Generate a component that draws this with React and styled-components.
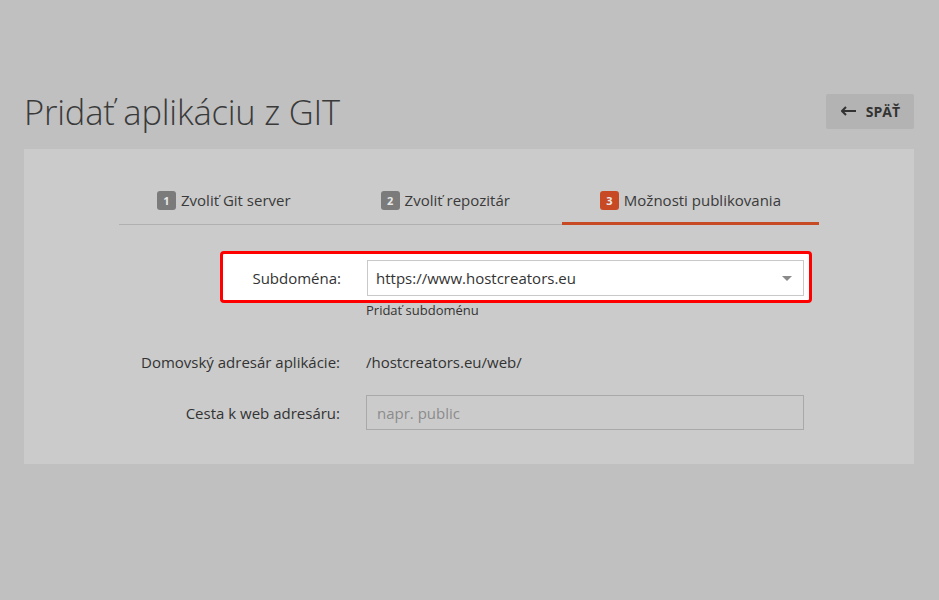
import React from "react";
import styled, { createGlobalStyle } from "styled-components";

const GlobalStyle = createGlobalStyle`
  html, body {
    margin: 0;
    padding: 0;
    background: #c0c0c0;
    font-family: "Open Sans", "Liberation Sans", sans-serif;
    color: #333;
  }
`;

const Page = styled.div`
  width: 939px;
  height: 600px;
  box-sizing: border-box;
  padding: 90px 25px 0 24px;
`;

const Header = styled.div`
  display: flex;
  align-items: center;
  justify-content: space-between;
  height: 42px;
  margin-bottom: 17px;
`;

const Title = styled.h1`
  margin: 0;
  font-size: 34.5px;
  font-weight: 300;
  color: #3a3a3a;
  letter-spacing: -0.2px;
`;

const BackButton = styled.button`
  display: flex;
  align-items: center;
  gap: 9px;
  height: 35px;
  padding: 0 14px 0 15px;
  border: none;
  border-radius: 2px;
  background: #b3b3b3;
  color: #333;
  font-family: inherit;
  font-size: 14px;
  font-weight: 700;
  cursor: pointer;
`;

const Panel = styled.div`
  background: #cbcbcb;
  padding: 28px 95px 34px 95px;
`;

const Tabs = styled.div`
  display: flex;
  justify-content: space-between;
  border-bottom: 1px solid #b0b0b0;
`;

const Tab = styled.div`
  display: flex;
  align-items: center;
  gap: 5px;
  padding: 13px 38px 12px;
  font-size: 15px;
  color: #3a3a3a;
  border-bottom: 3px solid ${({ active }) => (active ? "#c84a25" : "transparent")};
  margin-bottom: -1px;
`;

const Badge = styled.span`
  display: inline-flex;
  align-items: center;
  justify-content: center;
  width: 19px;
  height: 19px;
  border-radius: 3px;
  background: ${({ active }) => (active ? "#c84a25" : "#7b7b7b")};
  color: #e8e8e8;
  font-size: 11px;
  font-weight: 700;
`;

const Form = styled.div`
  display: flex;
  flex-direction: column;
  padding-top: 26px;
`;

const Highlight = styled.div`
  box-sizing: border-box;
  margin-left: 101px;
  width: 592px;
  border: 3px solid #ff0000;
  border-radius: 4px;
  background: #ffffff;
  padding: 6px 5px 4px 0;
`;

const Row = styled.div`
  display: grid;
  grid-template-columns: ${({ inset }) => (inset ? "118px" : "221px")} 1fr;
  column-gap: 26px;
  align-items: center;
  margin-right: ${({ inset }) => (inset ? "0" : "15px")};
  margin-top: ${({ gap }) => gap || 0}px;
`;

const Label = styled.div`
  text-align: right;
  font-size: 15px;
  color: #333;
`;

const SelectBox = styled.div`
  position: relative;
  display: flex;
  align-items: center;
  height: 34px;
  border: 1px solid #c9c9c9;
  padding: 0 8px;
  font-size: 15px;
  color: #333;
  background: #fff;
`;

const Caret = styled.span`
  position: absolute;
  right: 11px;
  top: 15px;
  width: 0;
  height: 0;
  border-left: 5px solid transparent;
  border-right: 5px solid transparent;
  border-top: 5px solid #8a8a8a;
`;

const Hint = styled.div`
  margin-left: 247px;
  margin-top: -2px;
  font-size: 13px;
  color: #333;
`;

const Value = styled.div`
  font-size: 15px;
  color: #333;
`;

const TextInput = styled.input`
  height: 35px;
  box-sizing: border-box;
  border: 1px solid #a9a9a9;
  background: #cbcbcb;
  padding: 0 10px;
  font-family: inherit;
  font-size: 15px;
  color: #333;
  outline: none;

  &::placeholder {
    color: #8c8c8c;
  }
`;

const ArrowIcon = () => (
  <svg width="16" height="10" viewBox="0 0 16 10">
    <path d="M1 5 H15" stroke="#333" strokeWidth="2" />
    <path d="M5 1 L1 5 L5 9" stroke="#333" strokeWidth="2" fill="none" />
  </svg>
);

export default function App() {
  return (
    <>
      <GlobalStyle />
      <Page>
        <Header>
          <Title>Pridať aplikáciu z GIT</Title>
          <BackButton>
            <ArrowIcon />
            SPÄŤ
          </BackButton>
        </Header>
        <Panel>
          <Tabs>
            <Tab>
              <Badge>1</Badge>Zvoliť Git server
            </Tab>
            <Tab>
              <Badge>2</Badge>Zvoliť repozitár
            </Tab>
            <Tab active>
              <Badge active>3</Badge>Možnosti publikovania
            </Tab>
          </Tabs>
          <Form>
            <Highlight>
              <Row inset>
                <Label>Subdoména:</Label>
                <SelectBox>
                  https://www.hostcreators.eu
                  <Caret />
                </SelectBox>
              </Row>
            </Highlight>
            <Hint>Pridať subdoménu</Hint>
            <Row gap={33}>
              <Label>Domovský adresár aplikácie:</Label>
              <Value>/hostcreators.eu/web/</Value>
            </Row>
            <Row gap={23}>
              <Label>Cesta k web adresáru:</Label>
              <TextInput placeholder="napr. public" />
            </Row>
          </Form>
        </Panel>
      </Page>
    </>
  );
}
